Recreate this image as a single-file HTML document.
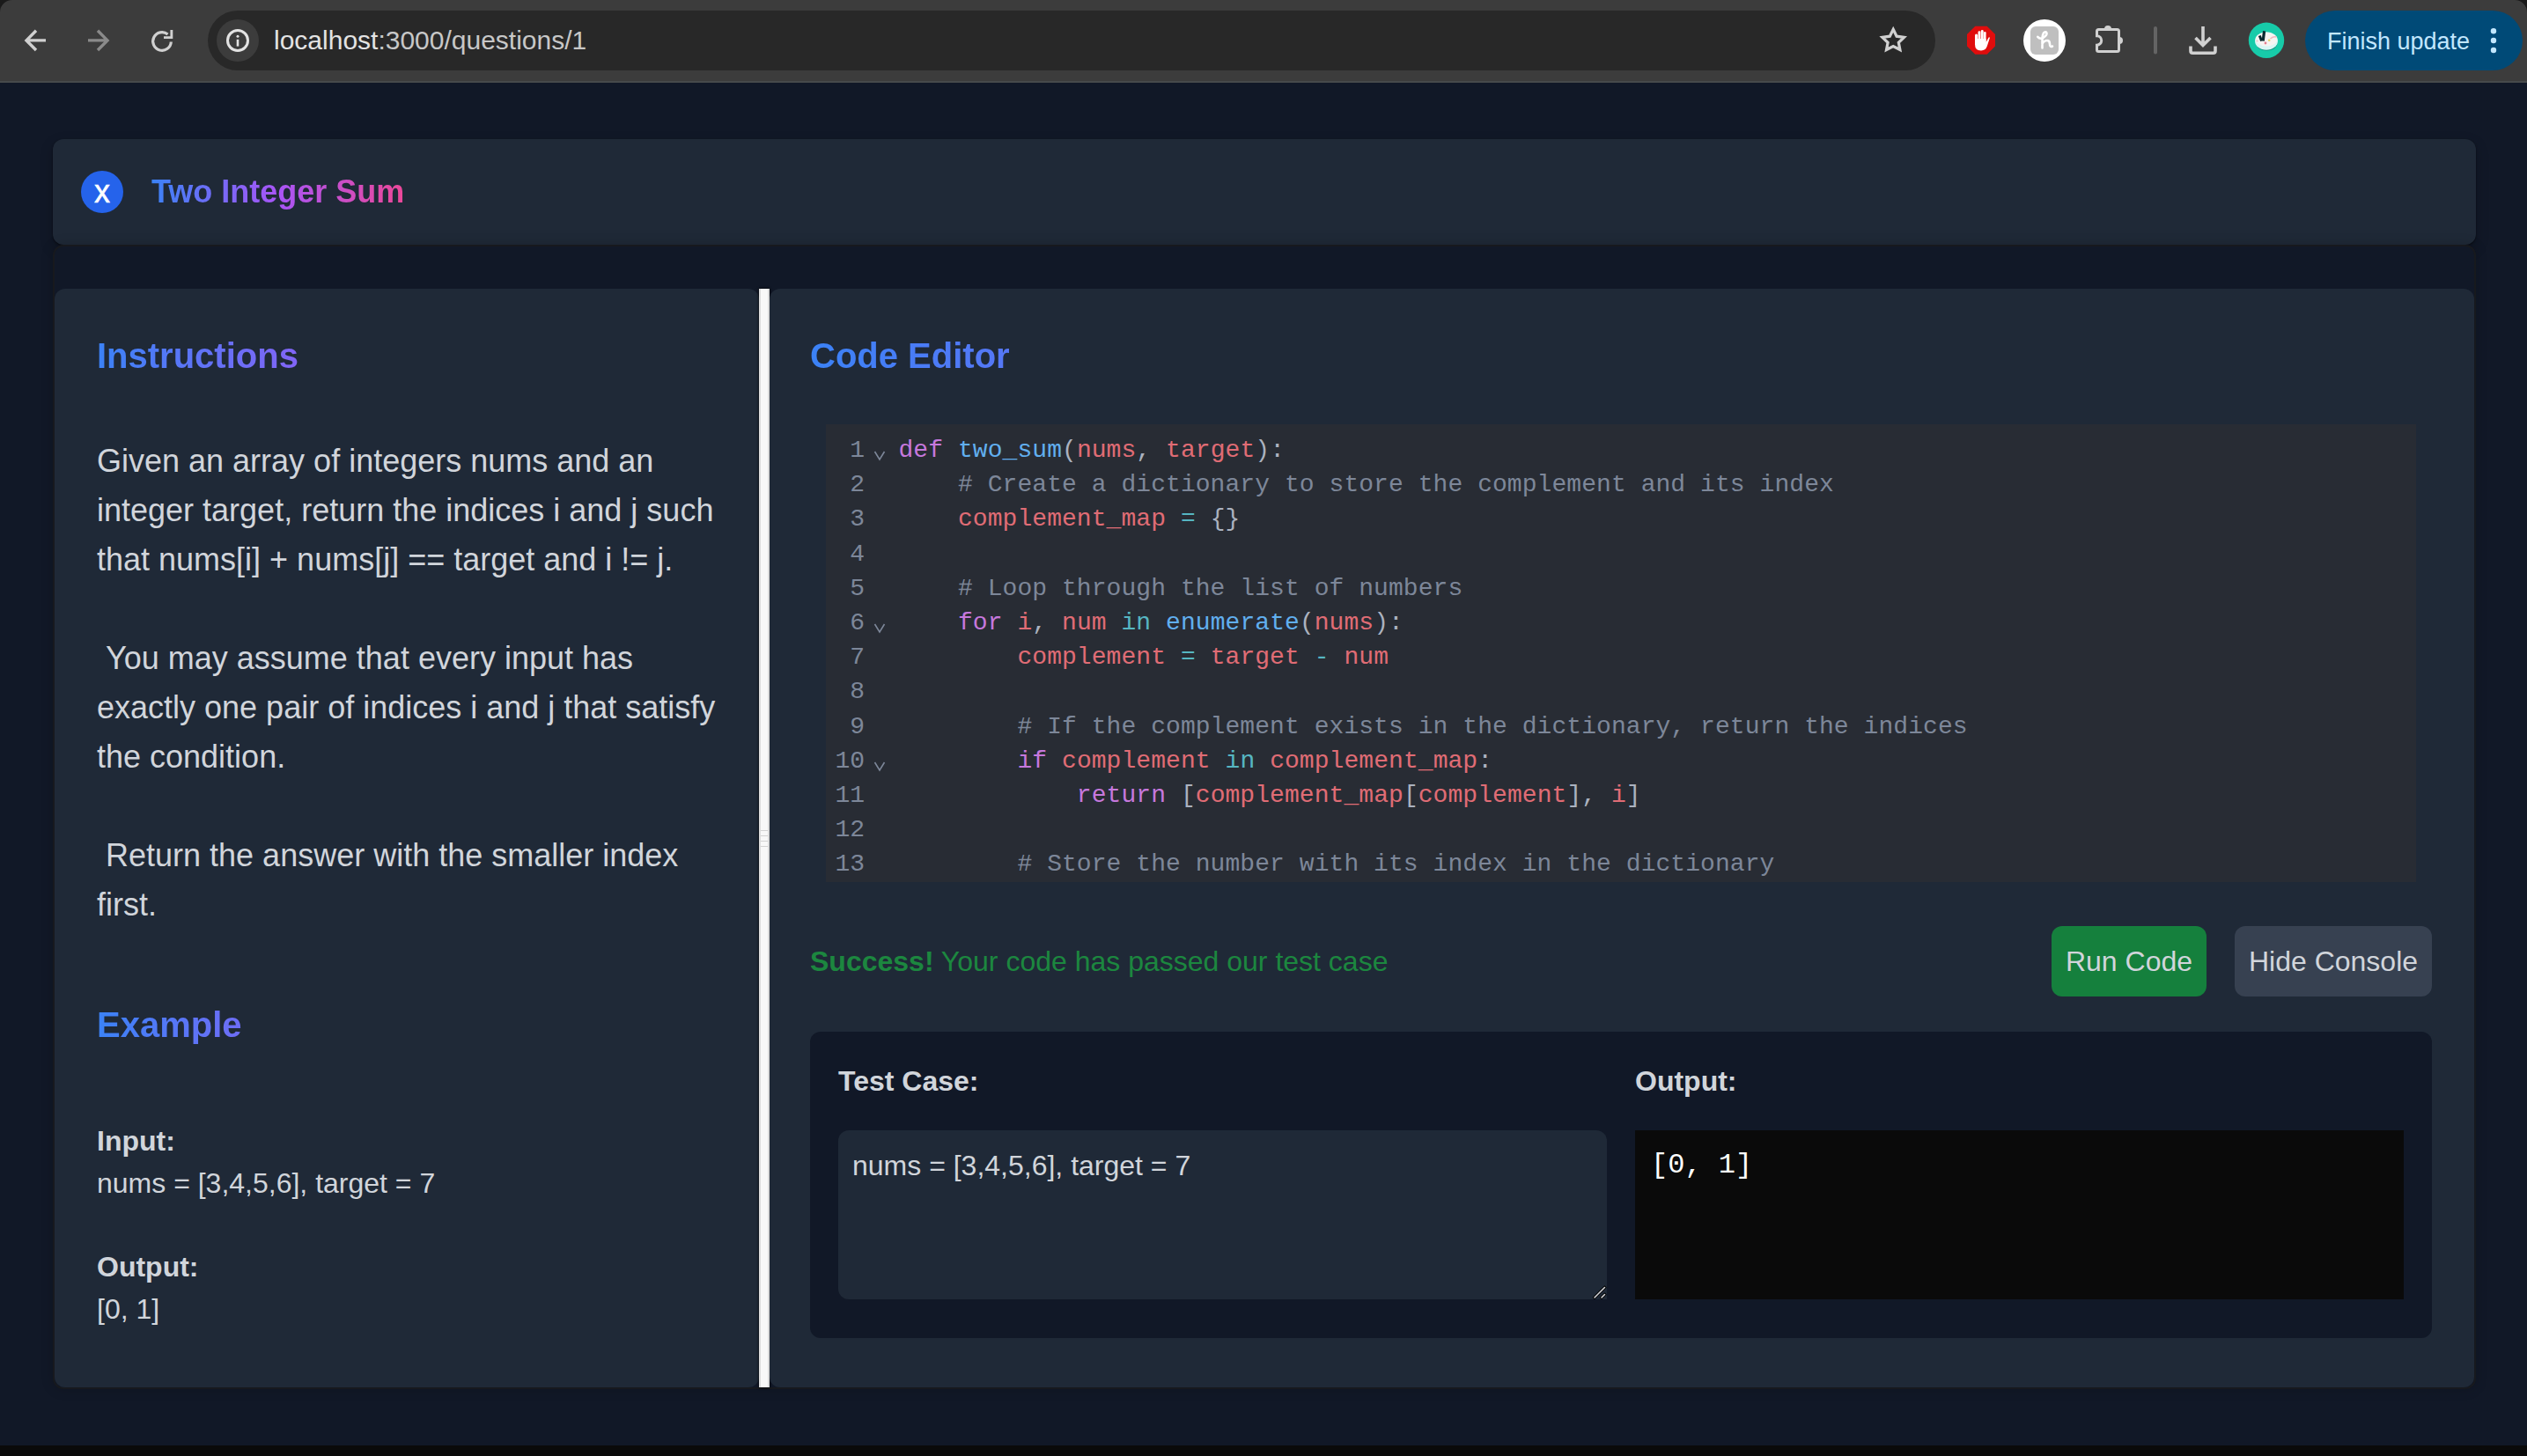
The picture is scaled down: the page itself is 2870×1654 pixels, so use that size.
<!DOCTYPE html>
<html>
<head>
<meta charset="utf-8">
<style>
*{box-sizing:border-box;margin:0;padding:0}
html,body{width:2870px;height:1654px;overflow:hidden}
body{background:#111827;font-family:"Liberation Sans",sans-serif;position:relative}
.abs{position:absolute}
/* browser chrome */
#chrome{left:0;top:0;width:2870px;height:94px;background:#3c3c3c;border-bottom:2px solid #474a4b}
#url{left:236px;top:12px;width:1962px;height:68px;border-radius:34px;background:#282828}
#info{left:246px;top:22px;width:48px;height:48px;border-radius:24px;background:#3c3c3c}
#urltext{left:311px;top:23px;font-size:30px;line-height:46px;color:#c7c7c7;white-space:nowrap}
#urltext b{font-weight:normal;color:#e3e3e3}
#finish{left:2618px;top:12px;width:247px;height:68px;border-radius:34px;background:#004a77}
#finishtxt{left:2643px;top:24px;font-size:27px;line-height:46px;color:#c2e7ff;white-space:nowrap}
/* page */
#bottomstrip{left:0;top:1642px;width:2870px;height:12px;background:#0a0a0a}
#header{left:60px;top:158px;width:2752px;height:120px;border-radius:12px;background:#1f2937;box-shadow:0 1px 2px rgba(0,0,0,.55),0 6px 16px rgba(0,0,0,.2)}
#xcirc{left:92px;top:194px;width:48px;height:48px;border-radius:24px;background:#2563eb;color:#fff;font-size:36px;line-height:47px;-webkit-text-stroke:0.5px #fff;text-align:center}
#title{left:172px;top:190px;font-size:36px;font-weight:bold;line-height:56px;white-space:nowrap;
 background:linear-gradient(to right,#3b82f6,#a855f7,#ec4899);-webkit-background-clip:text;background-clip:text;color:transparent}
#outer{left:60px;top:278px;width:2752px;height:1300px;border-radius:12px;border:2px solid #17191e;background:#111827;box-shadow:0 0 14px rgba(0,0,0,.18)}
.panel{background:#1f2937;border-radius:12px}
#lp{left:62px;top:328px;width:800px;height:1248px}
#rp{left:874px;top:328px;width:1936px;height:1248px}
#gut{left:862px;top:328px;width:12px;height:1248px;background:#f8f8f8;border-left:2px solid #dcdcdc;border-right:2px solid #dcdcdc;box-shadow:0 0 3px #000}
.h2{font-size:40px;font-weight:bold;line-height:56px;white-space:nowrap;
 background:linear-gradient(to right,#3b82f6,#a855f7,#ec4899);-webkit-background-clip:text;background-clip:text;color:transparent}
.txt{color:#d1d5db}
#para{left:110px;top:496px;width:704px;font-size:36px;line-height:56px;white-space:pre-wrap}
.s32{font-size:32px;line-height:48px;white-space:nowrap}
/* editor */
#cm{left:938px;top:482px;width:1806px;height:520px;background:#282c34;overflow:hidden;font-family:"Liberation Mono",monospace;font-size:28px;line-height:39.2px}
#cm .ln{position:absolute;left:0;width:44px;text-align:right;color:#7d8799}
#cm .code{position:absolute;left:82.5px;white-space:pre;color:#abb2bf;letter-spacing:0.06px}
#cm .fold{position:absolute;left:54px}
.k{color:#c678dd}.f{color:#61afef}.v{color:#e06c75}.o{color:#56b6c2}.c{color:#7d8799}
/* buttons */
.btn{height:80px;border-radius:12px;font-size:32px;line-height:80px;text-align:center;color:#d1d5db}
#run{left:2330px;top:1052px;width:176px;background:#15803d}
#hide{left:2538px;top:1052px;width:224px;background:#374151}
#console{left:920px;top:1172px;width:1842px;height:348px;border-radius:12px;background:#111827}
#ta{left:952px;top:1284px;width:873px;height:192px;border-radius:12px 12px 0 12px;background:#1f2937}
#outbox{left:1857px;top:1284px;width:873px;height:192px;background:#0a0a0a}
</style>
</head>
<body>
<div id="chrome" class="abs"></div>
<div id="url" class="abs"></div>
<div id="info" class="abs"></div>
<div id="urltext" class="abs"><b>localhost</b>:3000/questions/1</div>
<div id="finish" class="abs"></div>
<div id="finishtxt" class="abs">Finish update</div>
<svg class="abs" style="left:0;top:0" width="2870" height="94" viewBox="0 0 2870 94">
 <path d="M0 0 H14 A14 14 0 0 0 0 14 Z" fill="#1a1a1a"/>
 <path d="M2870 0 H2856 A14 14 0 0 1 2870 14 Z" fill="#1a1a1a"/>
 <g fill="none" stroke="#d0d0d0" stroke-width="3.4" stroke-linecap="butt">
  <path d="M52 45.9 H30.5 M41 34.8 L30 45.9 L41 57"/>
 </g>
 <g fill="none" stroke="#8a8a8a" stroke-width="3.4">
  <path d="M100 45.9 H121.5 M111 34.8 L122 45.9 L111 57"/>
 </g>
 <g fill="none" stroke="#d0d0d0" stroke-width="3.2">
  <path d="M194.3 47.5 A10.3 10.3 0 1 1 190.5 39"/>
 </g>
 <path d="M186 41.2 H193.4 V34 H196.3 V44 H186 Z" fill="#d0d0d0"/>
 <circle cx="270" cy="46" r="11.5" fill="none" stroke="#e3e3e3" stroke-width="3"/>
 <circle cx="270" cy="41.2" r="1.5" fill="#e3e3e3"/>
 <rect x="268.7" y="44.8" width="2.6" height="7.8" fill="#e3e3e3"/>
 <path transform="translate(2150.2 46) scale(0.94) translate(-2150.2 -46)" d="M2150.2 32.5 L2154.3 40.9 L2163.3 42.1 L2156.7 48.4 L2158.4 57.2 L2150.2 53 L2142 57.2 L2143.7 48.4 L2137.1 42.1 L2146.1 40.9 Z" fill="none" stroke="#d0d0d0" stroke-width="3.4" stroke-linejoin="miter"/>
 <path d="M2243.3 29.8 H2256.7 L2266 39.1 V52.5 L2256.7 61.8 H2243.3 L2234 52.5 V39.1 Z" fill="#e00d0d"/>
 <g fill="#fff">
  <rect x="2243" y="38.6" width="3.1" height="12" rx="1.55"/>
  <rect x="2246.5" y="35.2" width="2.9" height="14" rx="1.45"/>
  <rect x="2249.8" y="34" width="2.9" height="15" rx="1.45"/>
  <rect x="2253" y="36" width="2.6" height="13" rx="1.3"/>
  <path d="M2243 44 H2255.6 L2255.6 48 L2258.6 42.6 Q2259.6 41.8 2259.9 43 L2256.8 52.5 Q2255 57.4 2250 57.4 Q2243 57.4 2243 50.5 Z"/>
 </g>
 <circle cx="2322" cy="46" r="24" fill="#fff"/>
 <rect x="2306" y="30" width="32" height="32" rx="6" fill="#bfbfbf"/>
 <path d="M2314.3 41.8 Q2317 45 2320.5 43 Q2325 40 2324.5 37.5 Q2323.5 35.5 2321.5 37 Q2319.5 39 2319.5 45 V54.5 M2319.5 50 Q2321.5 46 2325 46 Q2328 46 2328 50 Q2328 54 2331 52.5" fill="none" stroke="#fff" stroke-width="2.6" stroke-linecap="round" stroke-linejoin="round"/>
 <path d="M2383.5 33.5 H2404.5 Q2406.5 33.5 2406.5 35.5 V56.5 Q2406.5 58.5 2404.5 58.5 H2383.5 Q2381.5 58.5 2381.5 56.5 V51.2 A5.2 5.2 0 0 0 2381.5 40.8 V35.5 Q2381.5 33.5 2383.5 33.5 Z" fill="none" stroke="#d0d0d0" stroke-width="3"/>
 <path d="M2390 33 A4 4 0 0 1 2398 33 Z" fill="#d0d0d0"/>
 <path d="M2407 42 A4 4 0 0 1 2407 50 Z" fill="#d0d0d0"/>
 <rect x="2446" y="30" width="4" height="31.5" rx="2" fill="#646464"/>
 <path d="M2502 30 V51.5 M2493.5 43 L2502 51.5 L2510.5 43" fill="none" stroke="#d0d0d0" stroke-width="3.6"/>
 <path d="M2488 52.5 V58 Q2488 60.2 2490.2 60.2 H2513.8 Q2516 60.2 2516 58 V52.5" fill="none" stroke="#d0d0d0" stroke-width="3.6"/>
 <circle cx="2574" cy="45.8" r="20.2" fill="#17cba9"/>
 <path d="M2562 49 Q2564 58 2575 57.5 Q2585.5 57 2587 48 Z" fill="#0f8f7c"/>
 <ellipse cx="2574" cy="46.5" rx="13" ry="10.2" fill="#d9f7f5"/>
 <ellipse cx="2574" cy="44.8" rx="12.2" ry="7.8" fill="#f6f4f2"/>
 <path d="M2578.5 44 Q2582 41 2585.5 42" stroke="#f1b9be" stroke-width="1.6" fill="none"/>
 <circle cx="2573" cy="49" r="1.4" fill="#e5808e"/>
 <circle cx="2577.2" cy="45.8" r="1.3" fill="#e9d66a"/>
 <circle cx="2563.5" cy="46.5" r="1" fill="#f1c0c6"/>
 <path d="M2571.6 35.2 L2570.2 46.5" stroke="#0a2a30" stroke-width="3.2"/>
 <path d="M2566.3 40.5 L2568.6 46.5" stroke="#0a2a30" stroke-width="3"/>
 <circle cx="2832" cy="35.3" r="3.2" fill="#c2e7ff"/>
 <circle cx="2832" cy="46" r="3.2" fill="#c2e7ff"/>
 <circle cx="2832" cy="57" r="3.2" fill="#c2e7ff"/>
</svg>


<div id="header" class="abs"></div>
<div id="xcirc" class="abs">x</div>
<div id="title" class="abs">Two Integer Sum</div>

<div id="outer" class="abs"></div>
<div id="lp" class="abs panel"></div>
<div id="gut" class="abs"></div>
<div class="abs" style="left:864px;top:942.5px;width:8px;height:1.3px;background:#d2d2d2"></div>
<div class="abs" style="left:864px;top:948.6px;width:8px;height:1.3px;background:#d2d2d2"></div>
<div class="abs" style="left:864px;top:954.7px;width:8px;height:1.3px;background:#d2d2d2"></div>
<div class="abs" style="left:864px;top:960.8px;width:8px;height:1.3px;background:#d2d2d2"></div>
<div id="rp" class="abs panel"></div>

<div class="abs h2" style="left:110px;top:376px;width:704px">Instructions</div>
<div id="para" class="abs txt">Given an array of integers nums and an integer target, return the indices i and j such that nums[i] + nums[j] == target and i != j.

 You may assume that every input has exactly one pair of indices i and j that satisfy the condition.

 Return the answer with the smaller index first.</div>
<div class="abs h2" style="left:110px;top:1136px;width:704px">Example</div>
<div class="abs txt s32" style="left:110px;top:1272px;font-weight:bold">Input:</div>
<div class="abs txt s32" style="left:110px;top:1320px">nums = [3,4,5,6], target = 7</div>
<div class="abs txt s32" style="left:110px;top:1415px;font-weight:bold">Output:</div>
<div class="abs txt s32" style="left:110px;top:1463px">[0, 1]</div>

<div class="abs h2" style="left:920px;top:376px;width:1842px">Code Editor</div>
<div id="cm" class="abs">
<div class="ln" style="top:10.0px">1</div>
<svg class="fold" style="top:10.0px" width="14" height="39" viewBox="0 0 14 39"><path d="M1.5 21 L7 30 L12.5 21" fill="none" stroke="#7d8799" stroke-width="1.6"/></svg>
<div class="code" style="top:10.0px"><span class="k">def</span> <span class="f">two_sum</span>(<span class="v">nums</span>, <span class="v">target</span>):</div>
<div class="ln" style="top:49.2px">2</div>
<div class="code" style="top:49.2px">    <span class="c"># Create a dictionary to store the complement and its index</span></div>
<div class="ln" style="top:88.4px">3</div>
<div class="code" style="top:88.4px">    <span class="v">complement_map</span> <span class="o">=</span> {}</div>
<div class="ln" style="top:127.6px">4</div>
<div class="code" style="top:127.6px"></div>
<div class="ln" style="top:166.8px">5</div>
<div class="code" style="top:166.8px">    <span class="c"># Loop through the list of numbers</span></div>
<div class="ln" style="top:206.0px">6</div>
<svg class="fold" style="top:206.0px" width="14" height="39" viewBox="0 0 14 39"><path d="M1.5 21 L7 30 L12.5 21" fill="none" stroke="#7d8799" stroke-width="1.6"/></svg>
<div class="code" style="top:206.0px">    <span class="k">for</span> <span class="v">i</span>, <span class="v">num</span> <span class="o">in</span> <span class="f">enumerate</span>(<span class="v">nums</span>):</div>
<div class="ln" style="top:245.2px">7</div>
<div class="code" style="top:245.2px">        <span class="v">complement</span> <span class="o">=</span> <span class="v">target</span> <span class="o">-</span> <span class="v">num</span></div>
<div class="ln" style="top:284.4px">8</div>
<div class="code" style="top:284.4px"></div>
<div class="ln" style="top:323.6px">9</div>
<div class="code" style="top:323.6px">        <span class="c"># If the complement exists in the dictionary, return the indices</span></div>
<div class="ln" style="top:362.8px">10</div>
<svg class="fold" style="top:362.8px" width="14" height="39" viewBox="0 0 14 39"><path d="M1.5 21 L7 30 L12.5 21" fill="none" stroke="#7d8799" stroke-width="1.6"/></svg>
<div class="code" style="top:362.8px">        <span class="k">if</span> <span class="v">complement</span> <span class="o">in</span> <span class="v">complement_map</span>:</div>
<div class="ln" style="top:402.0px">11</div>
<div class="code" style="top:402.0px">            <span class="k">return</span> [<span class="v">complement_map</span>[<span class="v">complement</span>], <span class="v">i</span>]</div>
<div class="ln" style="top:441.2px">12</div>
<div class="code" style="top:441.2px"></div>
<div class="ln" style="top:480.4px">13</div>
<div class="code" style="top:480.4px">        <span class="c"># Store the number with its index in the dictionary</span></div>
<div class="ln" style="top:519.6px">14</div>
<div class="code" style="top:519.6px">        <span class="v">complement_map</span>[<span class="v">num</span>] <span class="o">=</span> <span class="v">i</span></div>

</div>

<div class="abs s32" style="left:920px;top:1068px;color:#1c873f"><b>Success!</b> Your code has passed our test case</div>
<div id="run" class="abs btn">Run Code</div>
<div id="hide" class="abs btn">Hide Console</div>
<div id="console" class="abs"></div>
<div class="abs txt s32" style="left:952px;top:1204px;font-weight:bold">Test Case:</div>
<div id="ta" class="abs"></div>
<div class="abs txt s32" style="left:968px;top:1300px">nums = [3,4,5,6], target = 7</div>
<div class="abs txt s32" style="left:1857px;top:1204px;font-weight:bold">Output:</div>
<div id="outbox" class="abs"></div>
<div class="abs" style="left:1875px;top:1300px;font-family:'Liberation Mono',monospace;font-size:32px;line-height:48px;color:#fff;white-space:pre">[0, 1]</div>
<svg class="abs" style="left:1800px;top:1450px" width="30" height="30" viewBox="1800 1450 30 30"><g stroke="#000" stroke-width="3.2" stroke-linecap="square"><path d="M1811 1474 L1822.5 1462.5 M1819 1474 L1822.5 1470.5"/></g><g stroke="#cfd1d6" stroke-width="1.6" stroke-linecap="round"><path d="M1811 1474 L1822.5 1462.5 M1819 1474 L1822.5 1470.5"/></g></svg>

<div id="bottomstrip" class="abs"></div>
</body>
</html>
